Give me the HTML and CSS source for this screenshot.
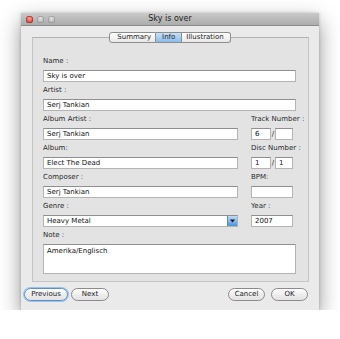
FILE: index.html
```html
<!DOCTYPE html>
<html lang="en">
<head>
    <meta charset="UTF-8">
    <meta name="viewport" content="width=device-width, initial-scale=1.0">
    <title>Sky is over</title>
    <link rel="stylesheet" href="styles.css">
</head>
<body>
    <div class="window">
        <div class="titlebar">
            <div class="lights">
                <span class="light close"></span>
                <span class="light"></span>
                <span class="light"></span>
            </div>
            <div class="title">Sky is over</div>
        </div>

        <div class="content">
            <div class="tabs">
                <span class="tab">Summary</span>
                <span class="tab active">Info</span>
                <span class="tab">Illustration</span>
            </div>

            <div class="panel">
                <div class="form">
                    <div class="field wide">
                        <div class="label">Name :</div>
                        <div class="input">Sky is over</div>
                    </div>
                    <div class="field wide">
                        <div class="label">Artist :</div>
                        <div class="input">Serj Tankian</div>
                    </div>

                    <div class="field">
                        <div class="label">Album Artist :</div>
                        <div class="input">Serj Tankian</div>
                    </div>
                    <div class="field side">
                        <div class="label">Track Number :</div>
                        <div class="pair">
                            <div class="input small">6</div>
                            <span class="slash">/</span>
                            <div class="input small"></div>
                        </div>
                    </div>

                    <div class="field">
                        <div class="label">Album:</div>
                        <div class="input">Elect The Dead</div>
                    </div>
                    <div class="field side">
                        <div class="label">Disc Number :</div>
                        <div class="pair">
                            <div class="input small">1</div>
                            <span class="slash">/</span>
                            <div class="input small">1</div>
                        </div>
                    </div>

                    <div class="field">
                        <div class="label">Composer :</div>
                        <div class="input">Serj Tankian</div>
                    </div>
                    <div class="field side">
                        <div class="label">BPM:</div>
                        <div class="input short"></div>
                    </div>

                    <div class="field">
                        <div class="label">Genre :</div>
                        <div class="input select">
                            <span>Heavy Metal</span>
                            <span class="stepper">
                                <svg width="5" height="4" viewBox="0 0 5 4"><path d="M0 0.5 L5 0.5 L2.5 3.5 Z" fill="#1a1a1a"/></svg>
                            </span>
                        </div>
                    </div>
                    <div class="field side">
                        <div class="label">Year :</div>
                        <div class="input short">2007</div>
                    </div>

                    <div class="field wide">
                        <div class="label">Note :</div>
                        <div class="input note">Amerika/Englisch</div>
                    </div>
                </div>
            </div>

            <div class="buttons">
                <div class="group">
                    <span class="btn focus">Previous</span>
                    <span class="btn">Next</span>
                </div>
                <div class="group">
                    <span class="btn">Cancel</span>
                    <span class="btn">OK</span>
                </div>
            </div>
        </div>
    </div>
</body>
</html>
```

FILE: styles.css
```css
body {
    margin: 0;
    background: white;
    font-family: "DejaVu Sans", sans-serif;
    color: #1e1e1e;
}

.window {
    width: 298px;
    height: 297px;
    margin: 13px 0 0 21px;
    background: #eaeaea;
    box-shadow: 0 8px 20px rgba(0, 0, 0, 0.42), 0 0 3px rgba(0, 0, 0, 0.2);
    display: flex;
    flex-direction: column;
}

.titlebar {
    height: 12px;
    background: linear-gradient(#c9c9c9, #acacac);
    border-bottom: 1px solid #8c8c8c;
    display: flex;
    align-items: center;
    position: relative;
}

.lights {
    display: flex;
    gap: 4px;
    padding-left: 5px;
}

.light {
    width: 7px;
    height: 7px;
    border-radius: 50%;
    background: radial-gradient(circle at 50% 35%, #e2e2e2, #a5a5a5);
    box-shadow: inset 0 0 0 0.5px #8a8a8a;
}

.light.close {
    background: radial-gradient(circle at 50% 35%, #f7a39a, #d1251b);
    box-shadow: inset 0 0 0 0.5px #9a1a12;
}

.title {
    position: absolute;
    left: 0;
    right: 0;
    text-align: center;
    font-size: 8px;
    line-height: 12px;
    color: #1d1d1d;
}

.content {
    flex: 1;
    display: flex;
    flex-direction: column;
    padding-top: 6px;
}

.tabs {
    display: flex;
    justify-content: center;
    margin: 0 0 -6px 0;
    position: relative;
    z-index: 1;
}

.tab {
    height: 9px;
    line-height: 9px;
    font-size: 7px;
    padding: 0 4px;
    background: linear-gradient(#ffffff, #e8e8e8);
    border: 1px solid #8d8d8d;
    border-left: none;
    color: #1c1c1c;
}

.tab:first-child {
    border-left: 1px solid #8d8d8d;
    border-radius: 3px 0 0 3px;
    padding-left: 7px;
}

.tab:last-child {
    border-radius: 0 3px 3px 0;
    padding-right: 6px;
}

.tab.active {
    background: linear-gradient(#c6e0f8, #8bbcec);
    padding: 0 6px;
}

.panel {
    height: 245px;
    box-sizing: border-box;
    margin: 0 10px 0 11px;
    background: #e3e3e3;
    border: 1px solid #c4c4c4;
    border-top-color: #b3b3b3;
    padding: 17px 12px 7px 10px;
}

.form {
    display: grid;
    grid-template-columns: 195px minmax(0, 1fr);
    column-gap: 13px;
    row-gap: 2px;
}

.field.wide {
    grid-column: 1 / 3;
}

.label {
    font-size: 7px;
    line-height: 12px;
    height: 12px;
    margin-bottom: 3px;
    color: #2a2a2a;
    white-space: nowrap;
}

.input {
    height: 12px;
    box-sizing: border-box;
    background: white;
    border: 1px solid #b4b4b4;
    border-top-color: #8f8f8f;
    font-size: 7px;
    line-height: 10px;
    padding-left: 3px;
    color: #111;
}

.input.short {
    width: 42px;
}

.pair {
    display: flex;
    align-items: center;
}

.input.small {
    width: 20px;
}

.pair .input.small:last-child {
    width: 18px;
}

.slash {
    font-size: 7px;
    width: 4px;
    text-align: center;
}

.input.select {
    display: flex;
    justify-content: space-between;
    padding-right: 0;
}

.stepper {
    width: 9px;
    height: 10px;
    background: linear-gradient(#c2dcf6, #4b93dc);
    border-left: 1px solid #5a88b8;
    display: flex;
    align-items: center;
    justify-content: center;
}

.input.note {
    height: 30px;
    padding-top: 1px;
}

.buttons {
    display: flex;
    justify-content: space-between;
    padding: 6px 11px 0 3px;
}

.group {
    display: flex;
    gap: 3px;
}

.group:last-child {
    gap: 6px;
}

.btn {
    height: 13px;
    box-sizing: border-box;
    line-height: 11px;
    font-size: 7px;
    border: 1px solid #8b8b8b;
    border-radius: 7px;
    background: linear-gradient(#ffffff, #eeeeee 50%, #e2e2e2);
    padding: 0 4px;
    text-align: center;
    color: #1a1a1a;
}

.btn.focus {
    border-color: #5e8fc8;
    box-shadow: 0 0 0 1px #9cc2ec;
    width: 44px;
}

.group:first-child .btn:last-child {
    width: 38px;
}

.group:last-child .btn {
    width: 37px;
}
```
